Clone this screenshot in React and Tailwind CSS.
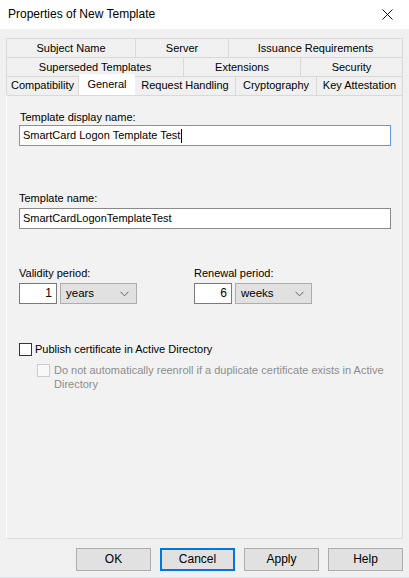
import React from 'react'

const tabRows = [
  [
    { label: 'Subject Name', w: 'w-[129px]' },
    { label: 'Server', w: 'w-[93px]' },
    { label: 'Issuance Requirements', w: 'flex-1' },
  ],
  [
    { label: 'Superseded Templates', w: 'w-[177px]' },
    { label: 'Extensions', w: 'w-[117px]' },
    { label: 'Security', w: 'flex-1' },
  ],
]

const frontRow = [
  { label: 'Compatibility', w: 'w-[73px]' },
  { label: 'General', w: 'w-[56px]', active: true },
  { label: 'Request Handling', w: 'w-[101px]' },
  { label: 'Cryptography', w: 'w-[81px]' },
  { label: 'Key Attestation', w: 'flex-1' },
]

function Chevron() {
  return (
    <svg width="9" height="6" viewBox="0 0 9 6" className="text-[#606060]">
      <path d="M0.5 0.8 L4.5 4.8 L8.5 0.8" fill="none" stroke="currentColor" strokeWidth="1" />
    </svg>
  )
}

function PeriodField({ value, unit }) {
  return (
    <div className="flex gap-[3px]">
      <div className="w-[38px] h-[21px] bg-white border border-[#7a7a7a] flex items-center justify-end pr-[4px] text-[12px]">
        {value}
      </div>
      <div className="w-[77px] h-[21px] bg-[#e1e1e1] border border-[#adadad] flex items-center justify-between pl-[5px] pr-[7px] text-[11.5px]">
        <span>{unit}</span>
        <Chevron />
      </div>
    </div>
  )
}

function Button({ children, focused }) {
  return (
    <div
      className={
        'w-[75px] h-[23px] bg-[#e1e1e1] border flex items-center justify-center text-[12px] ' +
        (focused ? 'border-[#0078d7] shadow-[inset_0_0_0_1px_#0078d7]' : 'border-[#adadad]')
      }
    >
      {children}
    </div>
  )
}

export default function App() {
  return (
    <div className="w-[409px] h-[578px] bg-[#f0f0f0] text-black text-[11px] leading-[13px] font-['Liberation_Sans',Arial,sans-serif] flex flex-col border-b border-[#cfe3f3] overflow-hidden">
      {/* title bar */}
      <div className="h-[29px] bg-white flex items-center justify-between pl-[8px] pr-[16px] shrink-0">
        <span className="text-[12px]">Properties of New Template</span>
        <svg width="11" height="11" viewBox="0 0 11 11">
          <path d="M0.5 0.5 L10.5 10.5 M10.5 0.5 L0.5 10.5" stroke="#111" strokeWidth="1" />
        </svg>
      </div>

      {/* tab strip */}
      <div className="mx-[6px] mt-[9px] w-[397px] flex flex-col">
        {tabRows.map((row, i) => (
          <div key={i} className="flex h-[19px] border-t border-l border-[#d9d9d9]">
            {row.map((t) => (
              <div key={t.label} className={t.w + ' border-r border-[#d9d9d9] flex items-center justify-center'}>
                {t.label}
              </div>
            ))}
          </div>
        ))}
        <div className="flex h-[19px] border-t border-[#d9d9d9] items-end">
          {frontRow.map((t, i) =>
            t.active ? (
              <div key={t.label} className={t.w + ' h-[21px] -mt-[2px] bg-white flex items-center justify-center pb-[1px] relative z-10'}>
                {t.label}
              </div>
            ) : (
              <div
                key={t.label}
                className={
                  t.w +
                  ' h-[19px] flex items-center justify-center border-r border-[#d9d9d9] ' +
                  (i === 0 ? 'border-l' : '')
                }
              >
                {t.label}
              </div>
            )
          )}
        </div>
      </div>

      {/* General page */}
      <div className="mx-[6px] w-[397px] h-[444px] border border-[#d9d9d9] border-l-white bg-[#f2f2f2] pl-[12px] pt-[15px] shrink-0">
        <div className="pl-[1px]">Template display name:</div>
        <div className="mt-[1px] w-[372px] h-[21px] bg-white border border-[#569de5] flex items-center pl-[3px] text-[11px]">
          SmartCard Logon Template Test
          <span className="ml-[1px] w-px h-[14px] bg-black" />
        </div>

        <div className="mt-[46px]">Template name:</div>
        <div className="mt-[3px] w-[372px] h-[21px] bg-white border border-[#8a8a8a] flex items-center pl-[3px] text-[11px]">
          SmartCardLogonTemplateTest
        </div>

        <div className="mt-[38px] flex">
          <div className="w-[175px]">
            <div>Validity period:</div>
            <div className="mt-[3px]">
              <PeriodField value="1" unit="years" />
            </div>
          </div>
          <div>
            <div>Renewal period:</div>
            <div className="mt-[3px]">
              <PeriodField value="6" unit="weeks" />
            </div>
          </div>
        </div>

        <div className="mt-[39px] flex items-center gap-[3px]">
          <div className="w-[13px] h-[13px] bg-white border border-[#333]" />
          <span>Publish certificate in Active Directory</span>
        </div>

        <div className="mt-[7px] ml-[18px] flex items-start gap-[4px] text-[#8d8d8d]">
          <div className="mt-[1px] w-[13px] h-[13px] shrink-0 bg-[#f8f8f8] border border-[#cccccc]" />
          <span className="w-[340px] leading-[14px]">
            Do not automatically reenroll if a duplicate certificate exists in Active Directory
          </span>
        </div>
      </div>

      {/* dialog buttons */}
      <div className="mt-[9px] flex justify-end gap-[9px] pr-[6px]">
        <Button>OK</Button>
        <Button focused>Cancel</Button>
        <Button>Apply</Button>
        <Button>Help</Button>
      </div>
    </div>
  )
}
